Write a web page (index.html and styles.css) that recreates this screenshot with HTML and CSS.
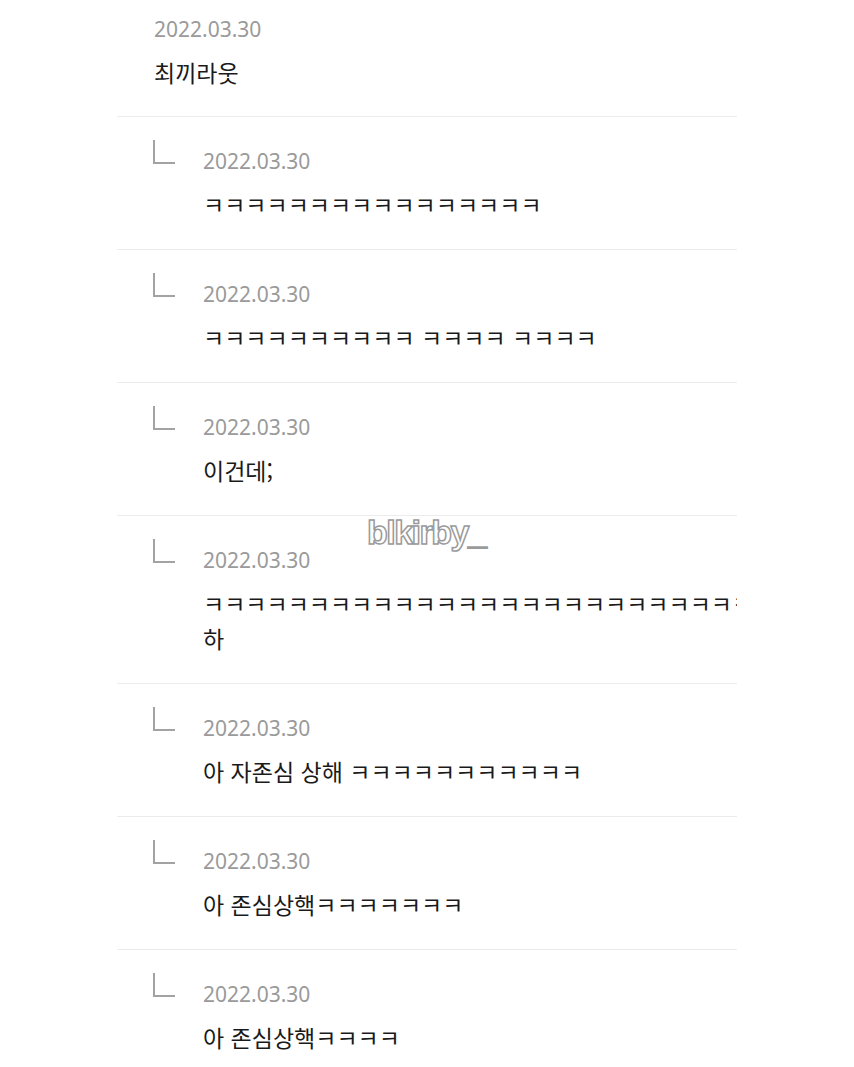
FILE: index.html
```html
<!DOCTYPE html>
<html lang="ko">
<head>
    <meta charset="UTF-8">
    <meta name="viewport" content="width=device-width, initial-scale=1.0">
    <title>댓글</title>
    <link rel="stylesheet" href="styles.css">
</head>
<body>

<div class="comments">
    <div class="comment">
        <p class="date">2022.03.30</p>
        <p class="text">최끼라웃</p>
    </div>

    <div class="comment reply">
        <span class="reply-mark"></span>
        <div class="reply-body">
            <p class="date">2022.03.30</p>
            <p class="text">ㅋㅋㅋㅋㅋㅋㅋㅋㅋㅋㅋㅋㅋㅋㅋㅋ</p>
        </div>
    </div>

    <div class="comment reply">
        <span class="reply-mark"></span>
        <div class="reply-body">
            <p class="date">2022.03.30</p>
            <p class="text">ㅋㅋㅋㅋㅋㅋㅋㅋㅋㅋ ㅋㅋㅋㅋ ㅋㅋㅋㅋ</p>
        </div>
    </div>

    <div class="comment reply">
        <span class="reply-mark"></span>
        <div class="reply-body">
            <p class="date">2022.03.30</p>
            <p class="text">이건데;</p>
        </div>
    </div>

    <div class="comment reply">
        <span class="reply-mark"></span>
        <div class="reply-body">
            <p class="date">2022.03.30</p>
            <p class="text nowrap">ㅋㅋㅋㅋㅋㅋㅋㅋㅋㅋㅋㅋㅋㅋㅋㅋㅋㅋㅋㅋㅋㅋㅋㅋㅋㅋ<br>하</p>
        </div>
    </div>

    <div class="comment reply">
        <span class="reply-mark"></span>
        <div class="reply-body">
            <p class="date">2022.03.30</p>
            <p class="text">아 자존심 상해 ㅋㅋㅋㅋㅋㅋㅋㅋㅋㅋㅋ</p>
        </div>
    </div>

    <div class="comment reply">
        <span class="reply-mark"></span>
        <div class="reply-body">
            <p class="date">2022.03.30</p>
            <p class="text">아 존심상핵ㅋㅋㅋㅋㅋㅋㅋ</p>
        </div>
    </div>

    <div class="comment reply last">
        <span class="reply-mark"></span>
        <div class="reply-body">
            <p class="date">2022.03.30</p>
            <p class="text">아 존심상핵ㅋㅋㅋㅋ</p>
        </div>
    </div>

    <span class="watermark">blkirby_</span>
</div>

</body>
</html>
```

FILE: styles.css
```css
body {
    margin: 0;
    padding: 0;
    background: #fff;
    font-family: "Noto Sans CJK KR", "Noto Sans", sans-serif;
}
p {
    margin: 0;
}
.comments {
    position: relative;
    margin-left: 117px;
    width: 620px;
    overflow: hidden;
}
.comment {
    padding: 15px 0 26px 37px;
    border-bottom: 1px solid #ececec;
}
.comment.reply {
    display: flex;
    padding: 23px 0 27px 36px;
}
.comment.last {
    border-bottom: none;
}
.reply-mark {
    flex: none;
    width: 20px;
    height: 22px;
    border-left: 2px solid #a3a3a3;
    border-bottom: 2px solid #a3a3a3;
}
.reply-body {
    margin: 7px 0 0 28px;
}
.date {
    font-family: "Noto Sans", sans-serif;
    font-size: 21px;
    line-height: 28px;
    color: #9a9a9a;
}
.text {
    margin-top: 12px;
    font-size: 23px;
    line-height: 35px;
    color: #1a1a1a;
}
.nowrap {
    white-space: nowrap;
}
.watermark {
    position: absolute;
    left: 250px;
    top: 513px;
    font-family: "Liberation Sans", sans-serif;
    font-weight: bold;
    font-size: 34px;
    letter-spacing: -1.5px;
    color: #fff;
    -webkit-text-stroke: 1.5px #9a9a9a;
}
```
